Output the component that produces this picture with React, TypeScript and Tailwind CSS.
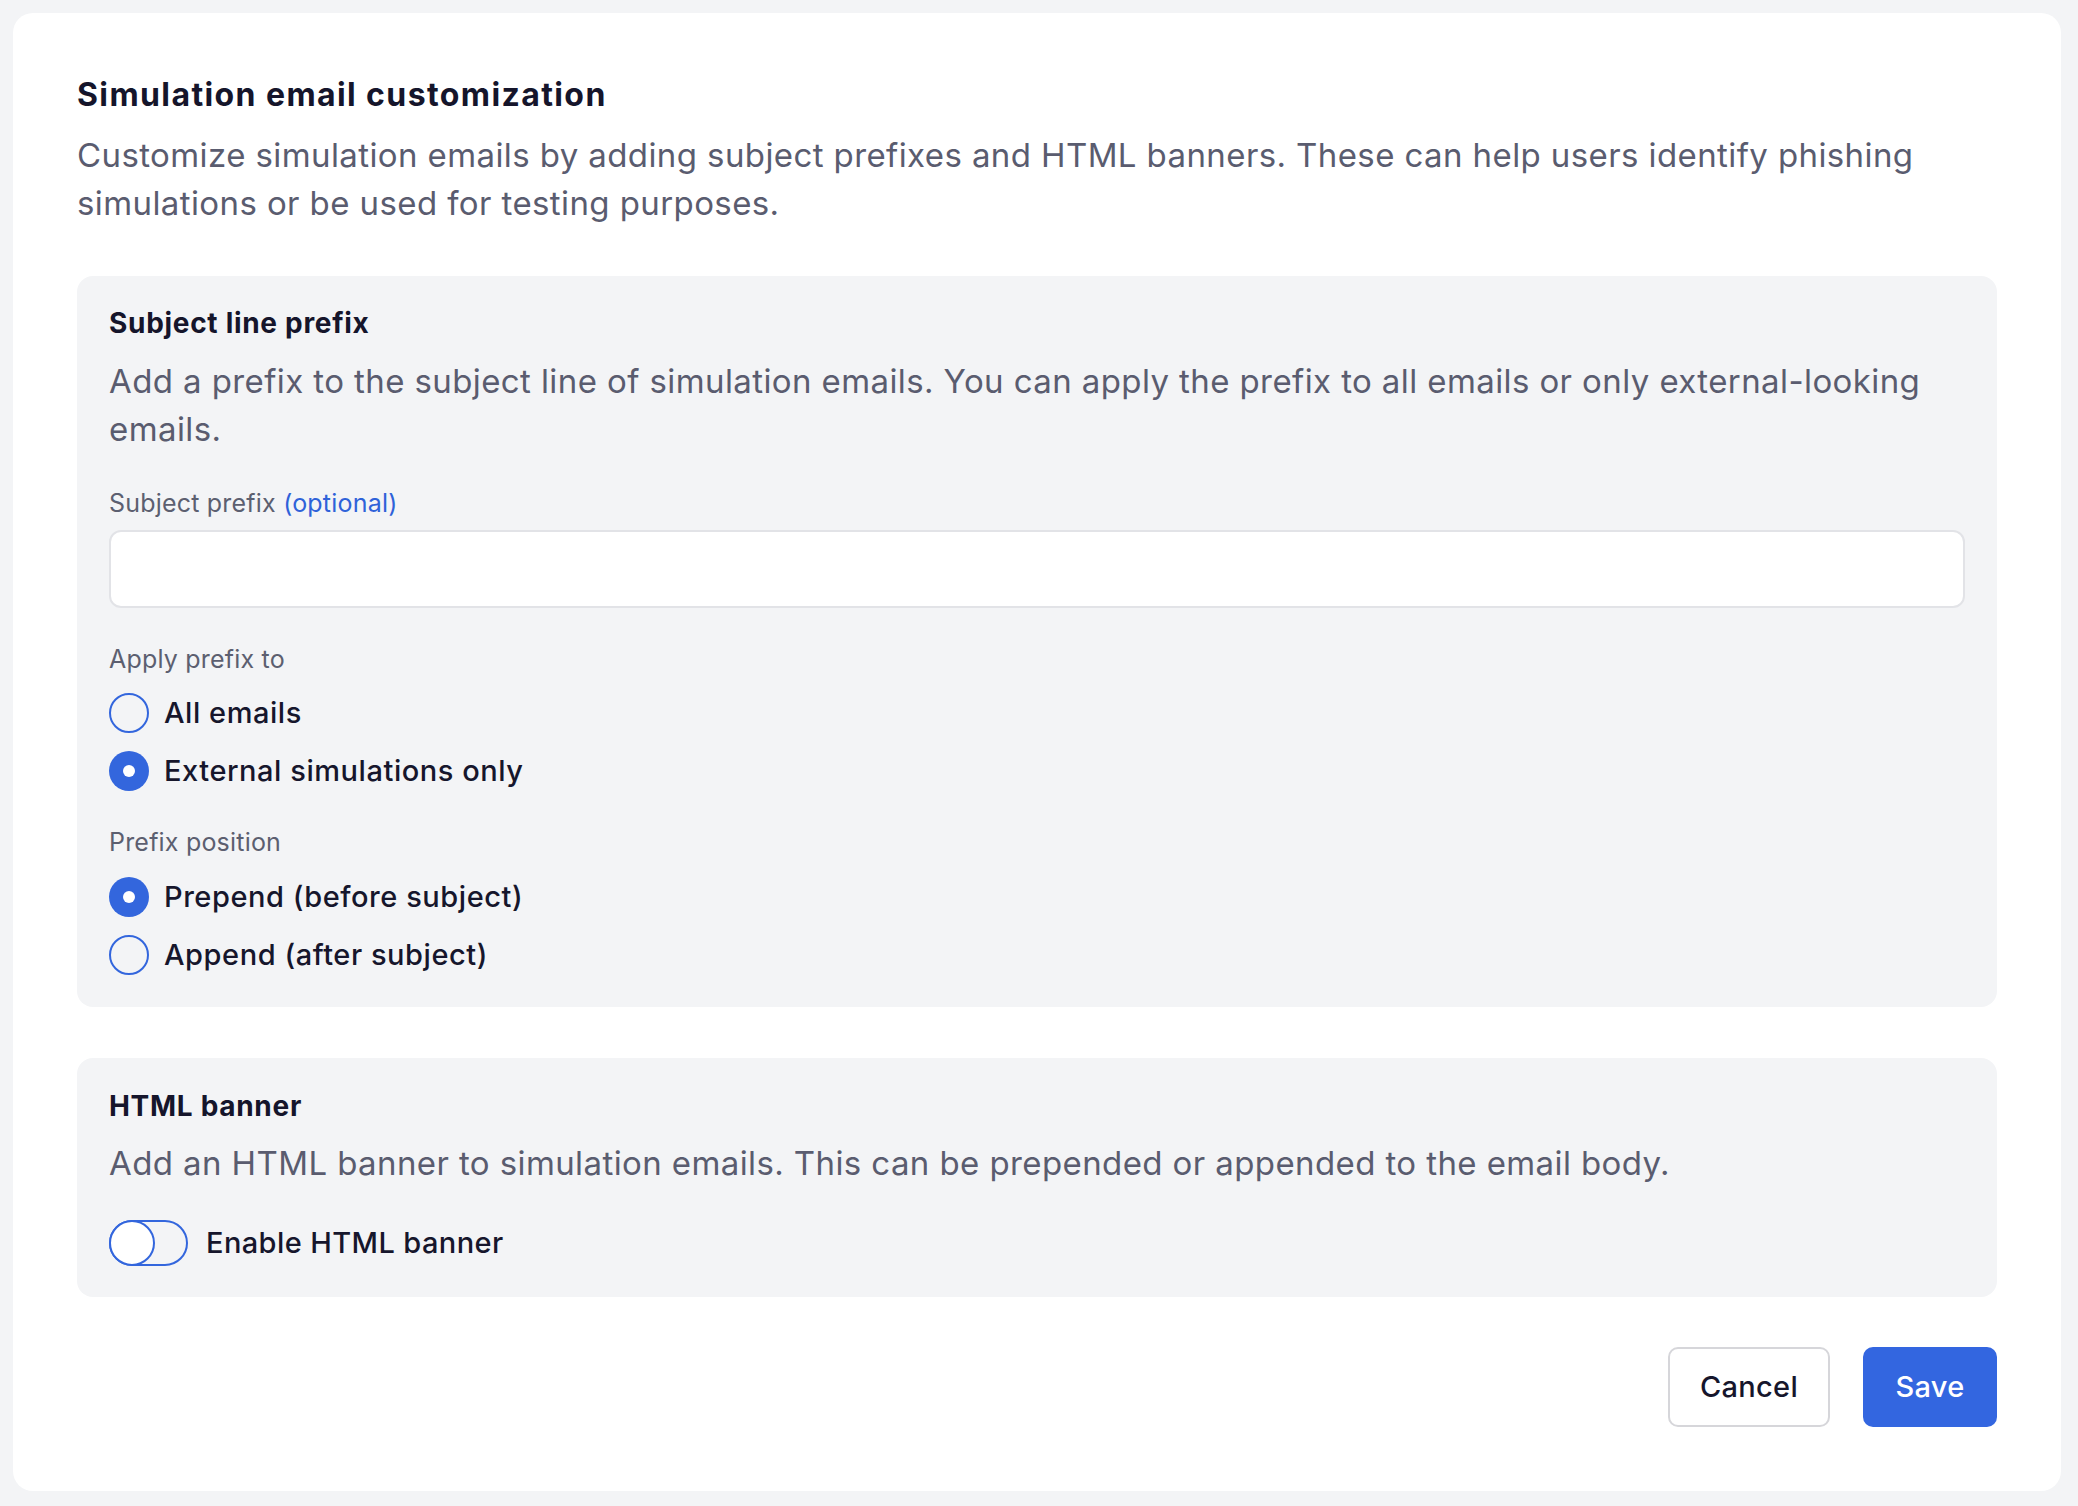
import React from "react";

function Radio({ checked, label }: { checked: boolean; label: string }) {
  return (
    <div className="flex h-[44px] items-center gap-[15px]">
      {checked ? (
        <span className="flex h-[40px] w-[40px] items-center justify-center rounded-full bg-[#3366dd]">
          <span className="h-[12px] w-[12px] rounded-full bg-white" />
        </span>
      ) : (
        <span className="h-[40px] w-[40px] rounded-full border-2 border-[#3366dd]" />
      )}
      <span className="text-[29px] font-medium leading-[44px] tracking-[0.55px] text-[#16162c]">{label}</span>
    </div>
  );
}

export default function App() {
  return (
    <div
      className="min-h-screen bg-[#f3f4f6] pt-[13px] pl-[13px] pr-[17px] pb-[15px]"
      style={{ fontFamily: "Inter, 'Noto Sans', sans-serif" }}
    >
      <div className="rounded-[20px] bg-white px-[64px] pt-[62px] pb-[64px]">
        <h1 className="text-[32px] font-bold leading-[40px] tracking-[1.4px] text-[#15152b]">
          Simulation email customization
        </h1>
        <p className="mt-[16px] text-[33px] leading-[48px] tracking-[0.4px] text-[#5a5c6f]">
          Customize simulation emails by adding subject prefixes and HTML banners. These can help users identify phishing
          simulations or be used for testing purposes.
        </p>

        <section className="mt-[49px] rounded-[16px] bg-[#f3f4f6] px-[32px] pt-[30px] pb-[30px]">
          <h2 className="text-[28px] font-bold leading-[34px] tracking-[0.7px] text-[#15152b]">Subject line prefix</h2>
          <p className="mt-[17px] text-[33px] leading-[48px] tracking-[0.4px] text-[#5a5c6f]">
            Add a prefix to the subject line of simulation emails. You can apply the prefix to all emails or only external-looking
            emails.
          </p>
          <label className="mt-[34px] block text-[25px] leading-[32px] tracking-[0.2px] text-[#5c5f70]">
            Subject prefix <span className="text-[#2f62d9]">(optional)</span>
          </label>
          <input
            type="text"
            className="mt-[11px] block h-[78px] w-full rounded-[12px] border-2 border-[#e2e3e7] bg-white px-[20px] text-[28px] outline-none"
          />
          <div className="mt-[35px] text-[25px] leading-[32px] tracking-[0.2px] text-[#5c5f70]">Apply prefix to</div>
          <div className="mt-[16px] flex flex-col gap-[14px]">
            <Radio checked={false} label="All emails" />
            <Radio checked={true} label="External simulations only" />
          </div>
          <div className="mt-[33px] text-[25px] leading-[32px] tracking-[0.2px] text-[#5c5f70]">Prefix position</div>
          <div className="mt-[17px] flex flex-col gap-[14px]">
            <Radio checked={true} label="Prepend (before subject)" />
            <Radio checked={false} label="Append (after subject)" />
          </div>
        </section>

        <section className="mt-[51px] rounded-[16px] bg-[#f3f4f6] px-[32px] pt-[31px] pb-[31px]">
          <h2 className="text-[28px] font-bold leading-[34px] tracking-[0.7px] text-[#15152b]">HTML banner</h2>
          <p className="mt-[16px] text-[33px] leading-[48px] tracking-[0.4px] text-[#5a5c6f]">
            Add an HTML banner to simulation emails. This can be prepended or appended to the email body.
          </p>
          <div className="mt-[33px] flex items-center gap-[18px]">
            <span className="relative h-[46px] w-[79px] rounded-full border-2 border-[#3366dd]">
              <span className="absolute left-[-2px] top-[-2px] h-[46px] w-[46px] rounded-full border-2 border-[#3366dd] bg-white" />
            </span>
            <span className="text-[29px] font-medium leading-[46px] tracking-[0.4px] text-[#16162c]">Enable HTML banner</span>
          </div>
        </section>

        <div className="mt-[50px] flex justify-end gap-[33px]">
          <button className="h-[80px] w-[162px] rounded-[10px] border-2 border-[#d6d6da] bg-white text-[29px] font-medium tracking-[0.3px] text-[#16162c]">
            Cancel
          </button>
          <button className="h-[80px] w-[134px] rounded-[10px] bg-[#3366e0] text-[29px] font-medium tracking-[0.3px] text-white">
            Save
          </button>
        </div>
      </div>
    </div>
  );
}
